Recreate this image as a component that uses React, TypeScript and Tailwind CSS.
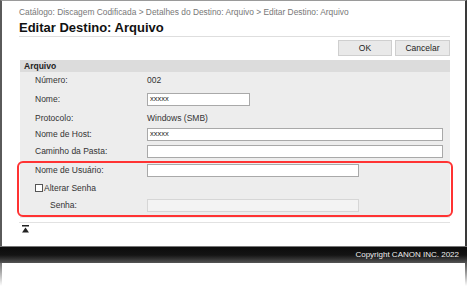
import React from "react";

const FONT = { fontFamily: '"Liberation Sans", Arial, sans-serif' };

function Row({
  label,
  height,
  indent = "pl-[15px]",
  children,
}: {
  label: string;
  height: string;
  indent?: string;
  children?: React.ReactNode;
}) {
  return (
    <div className={`flex items-center ${height}`}>
      <div className={`w-[127px] shrink-0 ${indent} text-[8.5px] text-[#333]`}>{label}</div>
      <div className="flex flex-1 items-center pr-[7px]">{children}</div>
    </div>
  );
}

function TextBox({
  value = "",
  width,
  disabled = false,
}: {
  value?: string;
  width: string;
  disabled?: boolean;
}) {
  return (
    <div
      className={`flex h-[13px] items-center border px-[2px] text-[7.5px] text-[#222] ${width} ${
        disabled ? "border-[#d6d6d6] bg-[#f3f3f3]" : "border-[#a9a9a9] bg-white"
      }`}
    >
      {value}
    </div>
  );
}

export default function App() {
  return (
    <div className="flex h-[286px] w-[467px] flex-col overflow-hidden bg-white" style={FONT}>
      <div className="flex h-[246px] flex-col border-l-2 border-r-2 border-t border-l-[#5a5a5a] border-r-[#3a3a3a] border-t-[#9a9a9a] pl-[17px] pr-[15px]">
        <div className="pt-[6px] text-[8.4px] leading-[10px] text-[#777]">
          Catálogo: Discagem Codificada &gt; Detalhes do Destino: Arquivo &gt; Editar Destino: Arquivo
        </div>
        <div className="mt-[4px] text-[13px] font-bold leading-[14px] text-[#111]">
          Editar Destino: Arquivo
        </div>
        <div className="mt-px h-px bg-[#dedede]" />
        <div className="mt-[3px] flex justify-end gap-[3px]">
          <div className="flex h-[16px] w-[54px] items-center justify-center border border-[#cfcfcf] bg-[#e9e9e9] text-[8.5px] text-[#222]">
            OK
          </div>
          <div className="flex h-[16px] w-[55px] items-center justify-center border border-[#cfcfcf] bg-[#e9e9e9] text-[8.5px] text-[#222]">
            Cancelar
          </div>
        </div>
        <div className="mt-[4px] ml-px flex h-[12px] items-center bg-[#dcdcdc] pl-[4px] text-[8.5px] font-bold text-[#222]">
          Arquivo
        </div>
        <div className="ml-px flex flex-col bg-[#ededed] pb-px">
          <Row label="Número:" height="h-[17px]">
            <span className="text-[8.5px] text-[#333]">002</span>
          </Row>
          <Row label="Nome:" height="h-[20px]">
            <TextBox value="xxxxx" width="w-[103px]" />
          </Row>
          <Row label="Protocolo:" height="h-[18px]">
            <span className="text-[8.5px] text-[#333]">Windows (SMB)</span>
          </Row>
          <Row label="Nome de Host:" height="h-[14px]">
            <TextBox value="xxxxx" width="w-full" />
          </Row>
          <Row label="Caminho da Pasta:" height="h-[20px]">
            <TextBox width="w-full" />
          </Row>
          <div className="-mx-[3px] rounded-[6px] border-2 border-[#ff3333] pl-px pb-[3px]">
            <Row label="Nome de Usuário:" height="h-[14px]">
              <TextBox width="w-[212px]" />
            </Row>
            <div className="flex h-[22px] items-center pl-[15px]">
              <div className="mr-[1px] h-[8px] w-[8px] border border-[#555] bg-white" />
              <span className="text-[8.5px] text-[#333]">Alterar Senha</span>
            </div>
            <Row label="Senha:" height="h-[13px]" indent="pl-[30px]">
              <TextBox width="w-[212px]" disabled />
            </Row>
          </div>
        </div>
        <div className="mt-[4px] h-px bg-[#e2e2e2]" />
        <div className="mt-[2px] pl-[3px]">
          <svg width="7" height="8" viewBox="0 0 7 8">
            <rect x="0" y="0" width="7" height="1.5" fill="#222" />
            <polygon points="3.5,2.5 7,7.5 0,7.5" fill="#222" />
          </svg>
        </div>
      </div>
      <div className="flex h-[17px] items-center justify-end border-t border-[#777] bg-gradient-to-b from-[#0c0c0c] via-[#141414] to-[#555] pr-[8px]">
        <span className="text-[8px] text-[#eee]">Copyright CANON INC. 2022</span>
      </div>
      <div className="flex flex-1 justify-between">
        <div className="w-[2px] bg-gradient-to-b from-[#777] to-white" />
        <div className="w-[2px] bg-gradient-to-b from-[#555] to-white" />
      </div>
    </div>
  );
}
